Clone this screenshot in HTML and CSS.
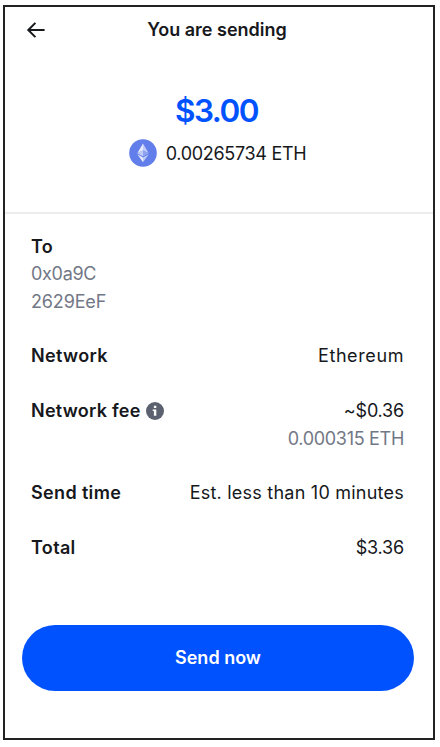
FILE: index.html
```html
<!DOCTYPE html>
<html lang="en">
<head>
<meta charset="utf-8">
<title>You are sending</title>
<link rel="stylesheet" href="styles.css">
</head>
<body>
<main class="screen">
  <header class="header">
    <svg class="back" viewBox="0 0 20 18" aria-label="Back"><path d="M18.6 9H2M9.4 1.9 2.3 9l7.1 7.1"/></svg>
    <h1 class="title">You are sending</h1>
  </header>
  <section class="hero">
    <div class="amount">$3.00</div>
    <div class="crypto">
      <svg class="eth" viewBox="0 0 28 28" aria-hidden="true">
        <circle cx="14" cy="14" r="13.8" fill="#627eea"/>
        <path fill="#e6eafc" d="M14 4.6 8.3 14.2 14 11.6z"/>
        <path fill="#c0cbf7" d="M14 4.6v7l5.7 2.6z"/>
        <path fill="#c0cbf7" d="M14 11.6 8.3 14.2 14 17.5z"/>
        <path fill="#8fa3f0" d="M14 11.6v5.9l5.7-3.3z"/>
        <path fill="#e6eafc" d="M8.3 15.3 14 23.3v-4.7z"/>
        <path fill="#c0cbf7" d="M14 18.6v4.7l5.7-8z"/>
      </svg>
      <span class="crypto-amount">0.00265734 ETH</span>
    </div>
  </section>
  <section class="details">
    <div class="row">
      <div><div class="label">To</div><div class="muted address-start">0x0a9C</div><div class="muted address-end">2629EeF</div></div>
    </div>
    <div class="row"><div class="label">Network</div><div class="value value-network">Ethereum</div></div>
    <div class="row">
      <div class="label label-fee"><span>Network fee</span>
        <svg class="info" viewBox="0 0 18 18" aria-label="Info"><circle cx="9" cy="9" r="9" fill="#5b616e"/><path fill="#fff" d="M7.9 3.8h2.4v2.3H7.9zM6.7 7.5h3.6v6.3H7.9V9.1H6.7z"/></svg>
      </div>
      <div class="value"><div class="value-usd">~$0.36</div><div class="muted value-fee-eth">0.000315 ETH</div></div>
    </div>
    <div class="row"><div class="label">Send time</div><div class="value value-time">Est. less than 10 minutes</div></div>
    <div class="row"><div class="label">Total</div><div class="value value-usd">$3.36</div></div>
  </section>
  <button class="send" type="button">Send now</button>
</main>
</body>
</html>
```
FILE: styles.css
```css
* { box-sizing: border-box; }
body {
  margin: 0;
  padding: 5px 5px 7px 3px;
  background: #fff;
  color: #16181c;
  font: 400 18px/27.4px Inter, "Liberation Sans", sans-serif;
}
.screen {
  width: 432px;
  height: 735px;
  border: 2px solid #222;
  background: #fff;
}
.header {
  display: grid;
  grid-template-columns: 50px 1fr 50px;
  align-items: center;
  height: 46px;
  padding-right: 4px;
}
.back {
  width: 20px;
  height: 18px;
  margin-left: 21px;
  fill: none;
  stroke: #16181c;
  stroke-width: 2;
}
.title {
  margin: 0;
  font-size: 18px;
  font-weight: 600;
  text-align: center;
  white-space: nowrap;
}
.hero {
  display: flex;
  flex-direction: column;
  align-items: center;
  height: 161px;
  padding: 38px 5px 0 0;
  border-bottom: 2px solid #ececee;
}
.amount {
  color: #0052ff;
  font-size: 31.5px;
  font-weight: 600;
  letter-spacing: -1.5px;
  line-height: 40px;
}
.crypto {
  display: flex;
  align-items: center;
  gap: 9px;
  height: 28px;
  margin: 8px 0 0 2px;
}
.eth { width: 28px; height: 28px; }
.crypto-amount { padding-top: 1px; letter-spacing: -0.3px; }
.details {
  display: flex;
  flex-direction: column;
  gap: 27.4px;
  padding: 18.7px 29px 0 26px;
}
.row { display: flex; justify-content: space-between; white-space: nowrap; }
.label { font-weight: 600; letter-spacing: 0.35px; }
.label-fee { display: flex; align-items: center; gap: 5px; height: 27.4px; letter-spacing: 0.25px; }
.info { width: 18px; height: 18px; }
.value { text-align: right; }
.value-network { letter-spacing: 0.6px; }
.value-time { letter-spacing: 0.23px; }
.value-usd { letter-spacing: -0.2px; }
.muted { color: #727786; }
.address-start { letter-spacing: -0.3px; }
.address-end { letter-spacing: -0.15px; }
.value-fee-eth { letter-spacing: -0.3px; }
.send {
  display: block;
  width: 392px;
  height: 66px;
  margin: 63.3px 0 0 17px;
  padding: 0;
  border: 0;
  border-radius: 33px;
  background: #0052ff;
  color: #fff;
  font: 600 18px/66px Inter, "Liberation Sans", sans-serif;
}
```
